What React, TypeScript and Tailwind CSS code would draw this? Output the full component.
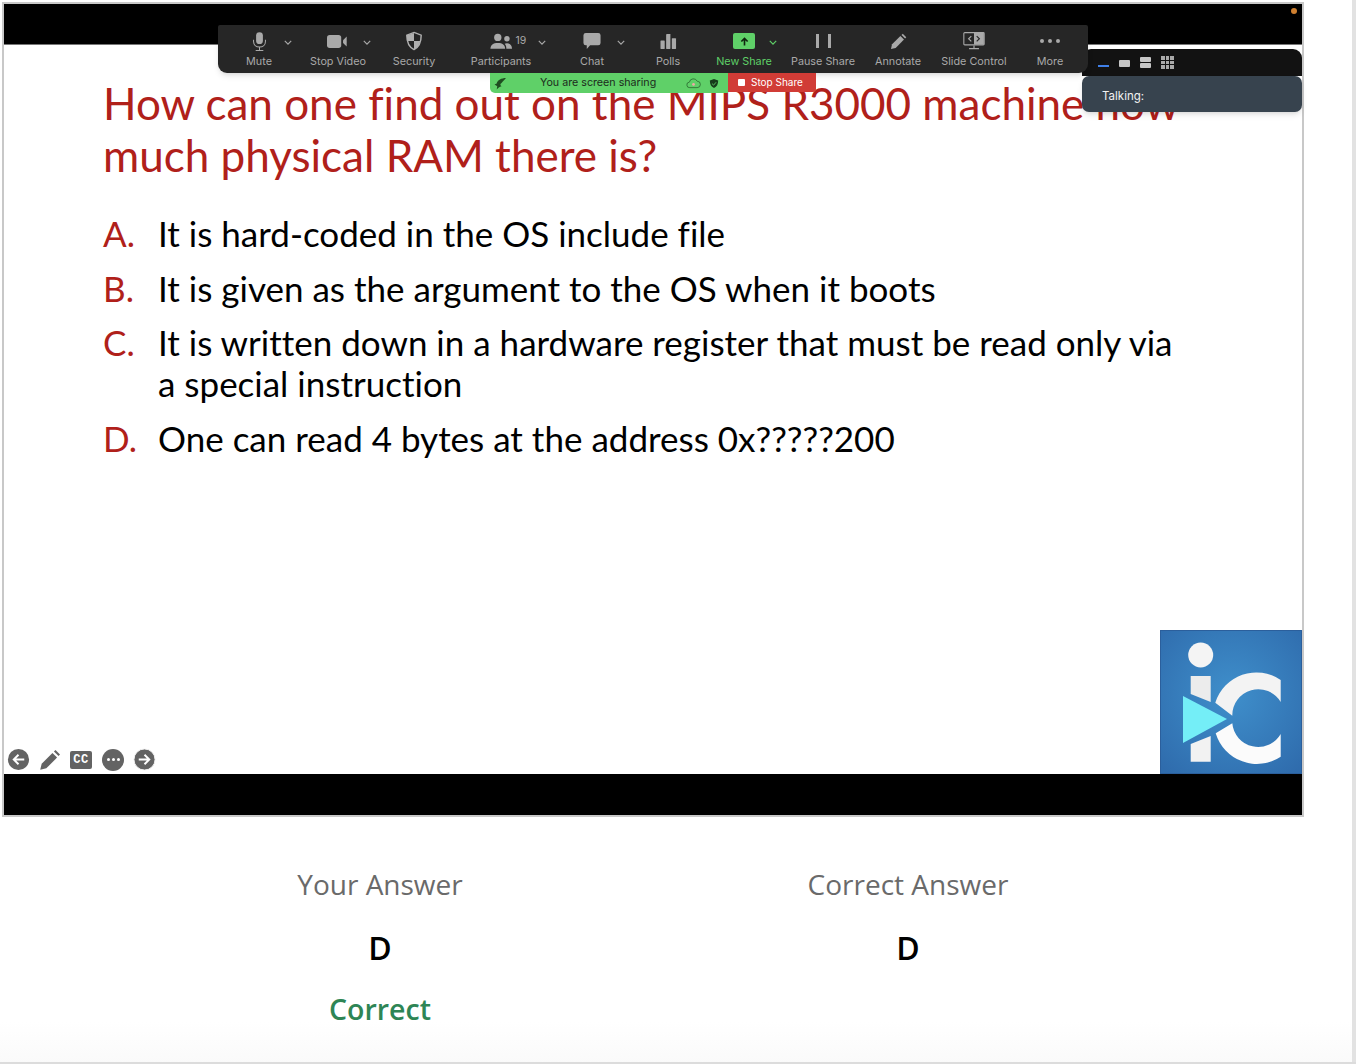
const slideFont = { fontFamily: "Lato, 'Open Sans', sans-serif", fontVariantLigatures: "none" };

const Chevron = ({ className }: { className: string }) => (
  <svg viewBox="0 0 10 6" className={`absolute top-[14px] w-[8px] h-[5px] ${className}`} fill="none" stroke="currentColor" strokeWidth="1.5">
    <path d="M1 1l4 4 4-4" />
  </svg>
);

const Mic = () => (
  <svg viewBox="0 0 20 24" className="w-[17px] h-[21px]" fill="#a9a9a9">
    <rect x="6" y="1" width="8" height="14" rx="4" />
    <path d="M3 10v2c0 4 3 6.500 7 6.500s7-2.500 7-6.500v-2" fill="none" stroke="#a9a9a9" strokeWidth="1.200" />
    <path d="M10 18.500V22M5.500 22.500h9" stroke="#a9a9a9" strokeWidth="1.200" />
  </svg>
);
const Video = () => (
  <svg viewBox="0 0 24 16" className="w-[22px] h-[15px]" fill="#a9a9a9">
    <rect x="0" y="1" width="15.500" height="14" rx="3" />
    <path d="M17.500 6.500L21.500 2.500V13.500L17.500 9.500z" />
  </svg>
);
const Shield = () => (
  <svg viewBox="0 0 20 22" className="w-[18px] h-[20px]">
    <path d="M10 1.500L18 4.500C18 12 16 17.500 10 20.500C4 17.500 2 12 2 4.500z" fill="none" stroke="#b0b0b0" strokeWidth="1.600" />
    <path d="M10 2v9H2.500C2.300 8.500 2 6.500 2 4.500zM10 11h7C16 15 14 18.500 10 20.500z" fill="#b0b0b0" />
  </svg>
);
const People = () => (
  <svg viewBox="0 0 24 18" className="w-[22px] h-[17px]" fill="#a9a9a9">
    <circle cx="8.500" cy="4.500" r="4" />
    <path d="M0.500 17c0-4.500 3-6.500 8-6.500s8 2 8 6.500z" />
    <circle cx="18.500" cy="6" r="3" />
    <path d="M17.800 17h6.200c0-3.800-1.800-6-5.500-6-1 0-1.800.2-2.500.5 1.300 1.300 1.900 3.100 1.800 5.500z" />
  </svg>
);
const Bubble = () => (
  <svg viewBox="0 0 20 20" className="w-[20px] h-[19px]" fill="#a9a9a9">
    <path d="M3.500 1h13A2.500 2.500 0 0 1 19 3.500v8a2.500 2.500 0 0 1-2.500 2.500H8l-3.500 4v-4h-1A2.500 2.500 0 0 1 1 11.500v-8A2.500 2.500 0 0 1 3.500 1z" />
  </svg>
);
const Polls = () => (
  <svg viewBox="0 0 18 18" className="w-[17px] h-[17px]" fill="#a9a9a9">
    <rect x="0.500" y="8" width="4.500" height="9" rx="0.500" />
    <rect x="6.500" y="1" width="4.500" height="16" rx="0.500" />
    <rect x="12.500" y="5.500" width="4.500" height="11.500" rx="0.500" />
  </svg>
);
const ShareUp = () => (
  <div className="w-[22px] h-[16px] rounded-[2px] bg-[#5fd068] flex items-center justify-center">
    <svg viewBox="0 0 10 10" className="w-[9px] h-[9px]" fill="none" stroke="#10240f" strokeWidth="1.800">
      <path d="M5 9.500V2M1.500 5L5 1.500 8.500 5" />
    </svg>
  </div>
);
const Pause = () => (
  <div className="flex gap-[9px]">
    <div className="w-[3px] h-[14px] bg-[#a9a9a9]" />
    <div className="w-[3px] h-[14px] bg-[#a9a9a9]" />
  </div>
);
const Pencil = ({ size = "w-[17px] h-[17px]", color = "#a9a9a9" }: { size?: string; color?: string }) => (
  <svg viewBox="0 0 18 18" className={size} fill={color}>
    <path d="M1 17l1.200-5L11 3.200l3.800 3.800L6 15.800z" />
    <path d="M12.200 2l1.300-1.200 3.700 3.700L16 5.800z" />
  </svg>
);
const SlideCtl = () => (
  <svg viewBox="0 0 24 20" className="w-[22px] h-[18px]">
    <rect x="0.700" y="0.700" width="22.600" height="13.600" rx="1" fill="none" stroke="#a9a9a9" strokeWidth="1.200" />
    <rect x="12" y="1" width="11" height="13" fill="#a9a9a9" />
    <path d="M9 4.500L6 7.500l3 3" fill="none" stroke="#a9a9a9" strokeWidth="1.300" />
    <path d="M15 4.500l3 3-3 3" fill="none" stroke="#262626" strokeWidth="1.300" />
    <path d="M12 15v3M6.500 18.500h11" stroke="#a9a9a9" strokeWidth="1.300" />
  </svg>
);
const Dots = () => (
  <div className="flex gap-[4px]">
    <div className="w-[4px] h-[4px] rounded-full bg-[#a9a9a9]" />
    <div className="w-[4px] h-[4px] rounded-full bg-[#a9a9a9]" />
    <div className="w-[4px] h-[4px] rounded-full bg-[#a9a9a9]" />
  </div>
);

const tools = [
  { label: "Mute", width: "w-[60px]", icon: <Mic />, chevron: "right-[-3px] text-[#a8a8a8]" },
  { label: "Stop Video", width: "w-[98px]", icon: <Video />, chevron: "right-[16px] text-[#a8a8a8]" },
  { label: "Security", width: "w-[54px]", icon: <Shield /> },
  { label: "Participants", width: "w-[120px]", icon: <div className="flex items-center gap-[4px] mr-[-14px]"><People /><span className="text-[10.500px] text-[#a9a9a9]">19</span></div>, chevron: "right-[15px] text-[#a8a8a8]" },
  { label: "Chat", width: "w-[62px]", icon: <Bubble />, chevron: "right-[-2px] text-[#a8a8a8]" },
  { label: "Polls", width: "w-[90px]", icon: <Polls /> },
  { label: "New Share", width: "w-[62px]", icon: <ShareUp />, chevron: "right-[-2px] text-[#5fd068]", green: true },
  { label: "Pause Share", width: "w-[96px]", icon: <Pause /> },
  { label: "Annotate", width: "w-[54px]", icon: <Pencil /> },
  { label: "Slide Control", width: "w-[98px]", icon: <SlideCtl /> },
  { label: "More", width: "w-[54px]", icon: <Dots /> },
];

const answers = [
  { key: "A.", lines: "It is hard-coded in the OS include file" },
  { key: "B.", lines: "It is given as the argument to the OS when it boots" },
  { key: "C.", lines: "It is written down in a hardware register that must be read only via a special instruction" },
  { key: "D.", lines: "One can read 4 bytes at the address 0x?????200" },
];

const Toolbar = () => (
  <div className="absolute left-[218px] top-[25px] w-[870px] h-[48px] px-[11px] pt-[1px] flex rounded-b-[9px] rounded-t-[2px] bg-[#262626] shadow-md" style={{ fontFamily: "Inter, sans-serif" }}>
    {tools.map((t) => (
      <div key={t.label} className={`${t.width} relative flex flex-col items-center shrink-0`}>
        <div className="h-[30px] flex items-center justify-center">{t.icon}</div>
        <span className={`text-[10.800px] leading-[12px] whitespace-nowrap ${t.green ? "text-[#5fd068]" : "text-[#a9a9a9]"}`}>{t.label}</span>
        {t.chevron && <Chevron className={t.chevron} />}
      </div>
    ))}
  </div>
);

const SharingBar = () => (
  <div className="absolute left-[490px] top-[73px] flex items-start" style={{ fontFamily: "Inter, sans-serif" }}>
    <div className="w-[238px] h-[20px] bg-[#5fd068] rounded-bl-[5px] flex items-center pl-[4px] text-[10.700px] text-[#1d2b1c]">
      <svg viewBox="0 0 12 12" className="w-[13px] h-[13px]" fill="#1f4d20">
        <path d="M11 1C7 1 3 3 2.500 6L0.500 7 3 8.500 2.500 11.500C4.500 9 6 9 7 8.500 5.500 8 5.500 6 7 5.500 8 4 10 2.500 11 1z" />
      </svg>
      <span className="ml-[33px] w-[146px] pt-[1px] whitespace-nowrap overflow-hidden">You are screen sharing</span>
      <svg viewBox="0 0 16 12" className="w-[15px] h-[11px]" fill="none" stroke="#2c6a31" strokeWidth="0.900">
        <path d="M4 10.500a3 3 0 0 1-.5-6A4.500 4.500 0 0 1 12 3.500a3.500 3.500 0 0 1 0 7z" />
        <circle cx="8" cy="7" r="1.500" fill="#f0a6a6" stroke="none" />
      </svg>
      <svg viewBox="0 0 12 12" className="w-[10px] h-[11px] ml-[8px]" fill="#173c1b">
        <path d="M6 .5L11 2.500C11 7 9.500 10 6 11.500 2.500 10 1 7 1 2.500z" />
        <path d="M3.500 6L5.500 8 8.500 4.500" stroke="#5fd068" fill="none" strokeWidth="1" />
      </svg>
    </div>
    <div className="w-[88px] h-[19px] bg-[#d13c36] rounded-br-[3px] flex items-center pl-[10px] text-[10px] text-white">
      <div className="w-[7px] h-[7px] bg-white rounded-[1px] mr-[6px]" />
      <span className="whitespace-nowrap">Stop Share</span>
    </div>
  </div>
);

const VideoPanel = () => (
  <div className="absolute left-[1082px] top-[49px] w-[220px] h-[63px] flex flex-col">
    <div className="h-[27px] bg-[#121212] rounded-t-[9px] flex items-center pl-[16px] gap-[10px]">
      <div className="w-[11px] h-[2px] mt-[7px] bg-[#3f7fe8]" />
      <div className="w-[11px] h-[7px] mt-[2px] rounded-[1px] bg-[#c6c6c6]" />
      <div className="w-[11px] flex flex-col gap-[1px]">
        <div className="h-[5px] rounded-[1px] bg-[#c6c6c6]" />
        <div className="h-[5px] rounded-[1px] bg-[#c6c6c6]" />
      </div>
      <div className="w-[13px] h-[13px] grid grid-cols-3 gap-[1px]">
        {[1, 2, 3, 4, 5, 6, 7, 8, 9].map((n) => (
          <div key={n} className="bg-[#a9a9a9]" />
        ))}
      </div>
    </div>
    <div className="h-[36px] bg-[#37434e] rounded-[7px] shadow-md flex items-center pl-[20px] pt-[6px] text-[11.500px] text-[#f2f2f2]" style={{ fontFamily: "Inter, sans-serif" }}>
      Talking:
    </div>
  </div>
);

const CircleArrow = ({ right }: { right?: boolean }) => (
  <svg viewBox="0 0 24 24" className="w-[23px] h-[23px]">
    <circle cx="12" cy="12" r="11" fill="#636363" stroke={right ? "#f1f1f1" : "none"} strokeWidth="1" />
    <path d={right ? "M6 12h11M12 7l5 5-5 5" : "M18 12H7M12 7l-5 5 5 5"} fill="none" stroke="#fff" strokeWidth="2" />
  </svg>
);

const SlideNav = () => (
  <div className="absolute left-[3px] bottom-[3px] flex items-center gap-[9px]">
    <CircleArrow />
    <Pencil size="w-[22px] h-[22px]" color="#636363" />
    <div className="w-[22px] h-[18px] rounded-[2px] bg-[#636363] text-white text-[12px] leading-[18px] text-center font-bold tracking-[0.5px]" style={{ fontFamily: "'Liberation Mono', monospace" }}>CC</div>
    <div className="ml-[1px] w-[22px] h-[22px] rounded-full bg-[#636363] flex items-center justify-center gap-[2px]">
      <div className="w-[3px] h-[3px] rounded-full bg-white" />
      <div className="w-[3px] h-[3px] rounded-full bg-white" />
      <div className="w-[3px] h-[3px] rounded-full bg-white" />
    </div>
    <CircleArrow right />
  </div>
);

const Logo = () => (
  <svg viewBox="0 0 142 144" className="absolute right-0 bottom-0 w-[142px] h-[144px]">
    <defs>
      <radialGradient id="logoBg" cx="50%" cy="45%" r="70%">
        <stop offset="0%" stopColor="#3f8fcb" />
        <stop offset="100%" stopColor="#2f6cad" />
      </radialGradient>
    </defs>
    <rect width="142" height="144" fill="url(#logoBg)" />
    <rect x="0.500" y="0.500" width="141" height="143" fill="none" stroke="#2b5f9c" />
    <circle cx="40.700" cy="25" r="12.500" fill="#f4f4f4" />
    <path d="M30.700 46h20v26l-20-8z" fill="#ececec" />
    <path d="M30.700 114l20-8v25.700h-20z" fill="#f2f2f2" />
    <path d="M55.300 72.700A43 43 0 0 1 120.700 50V72A26 26 0 0 0 72.300 85.700z" fill="#f3f3f3" />
    <path d="M55.700 103.300A43 43 0 0 0 120.700 126.700V104A26 26 0 0 1 72.300 93.300z" fill="#fbfbfb" />
    <path d="M23 66L67 89 23 113z" fill="#74eef7" />
  </svg>
);

export default function App() {
  return (
    <div className="relative w-[1356px] h-[1064px] overflow-hidden bg-gradient-to-b from-white from-96% to-[#fafafa]">
      <div className="ml-[2px] mt-[2px] w-[1302px] h-[815px] border-2 border-[#c8c8c8] flex flex-col bg-black">
        <div className="h-[41px] shrink-0 border-b border-[#777] relative">
          <div className="absolute right-[5px] top-[4px] w-[6px] h-[6px] rounded-full bg-[#d08030]" />
        </div>
        <div className="relative h-[729px] shrink-0 bg-white pl-[99px] pt-[32px]" style={slideFont}>
          <h1 className="w-[1090px] text-[44px] leading-[52px] font-normal text-[#b0201a]">
            How can one find out on the MIPS R3000 machine how much physical RAM there is?
          </h1>
          <ul className="mt-[32px] w-[1090px] flex flex-col gap-[13.500px] text-[35px] leading-[41px] text-black">
            {answers.map((a) => (
              <li key={a.key} className="flex">
                <span className="w-[55px] shrink-0 text-[#b0201a]">{a.key}</span>
                <span>{a.lines}</span>
              </li>
            ))}
          </ul>
          <SlideNav />
          <Logo />
        </div>
      </div>

      <div className="ml-[116px] w-[1056px] mt-[48px] grid grid-cols-2 text-center" style={{ fontFamily: "'Open Sans', sans-serif" }}>
        <div className="flex flex-col">
          <span className="h-[38px] text-[28px] leading-[38px] text-[#6a6a6a]">Your Answer</span>
          <span className="mt-[26px] h-[38px] text-[32px] leading-[38px] font-semibold text-black">D</span>
          <span className="mt-[23px] h-[38px] text-[28.500px] leading-[38px] font-semibold text-[#2e8555]">Correct</span>
        </div>
        <div className="flex flex-col">
          <span className="h-[38px] text-[28px] leading-[38px] text-[#6a6a6a]">Correct Answer</span>
          <span className="mt-[26px] h-[38px] text-[32px] leading-[38px] font-semibold text-black">D</span>
        </div>
      </div>

      <VideoPanel />
      <Toolbar />
      <SharingBar />
      <div className="absolute right-0 top-0 bottom-0 w-[4px] bg-[#e2e2e2]" />
      <div className="absolute left-0 right-0 bottom-0 h-[2px] bg-[#dcdcdc]" />
    </div>
  );
}
